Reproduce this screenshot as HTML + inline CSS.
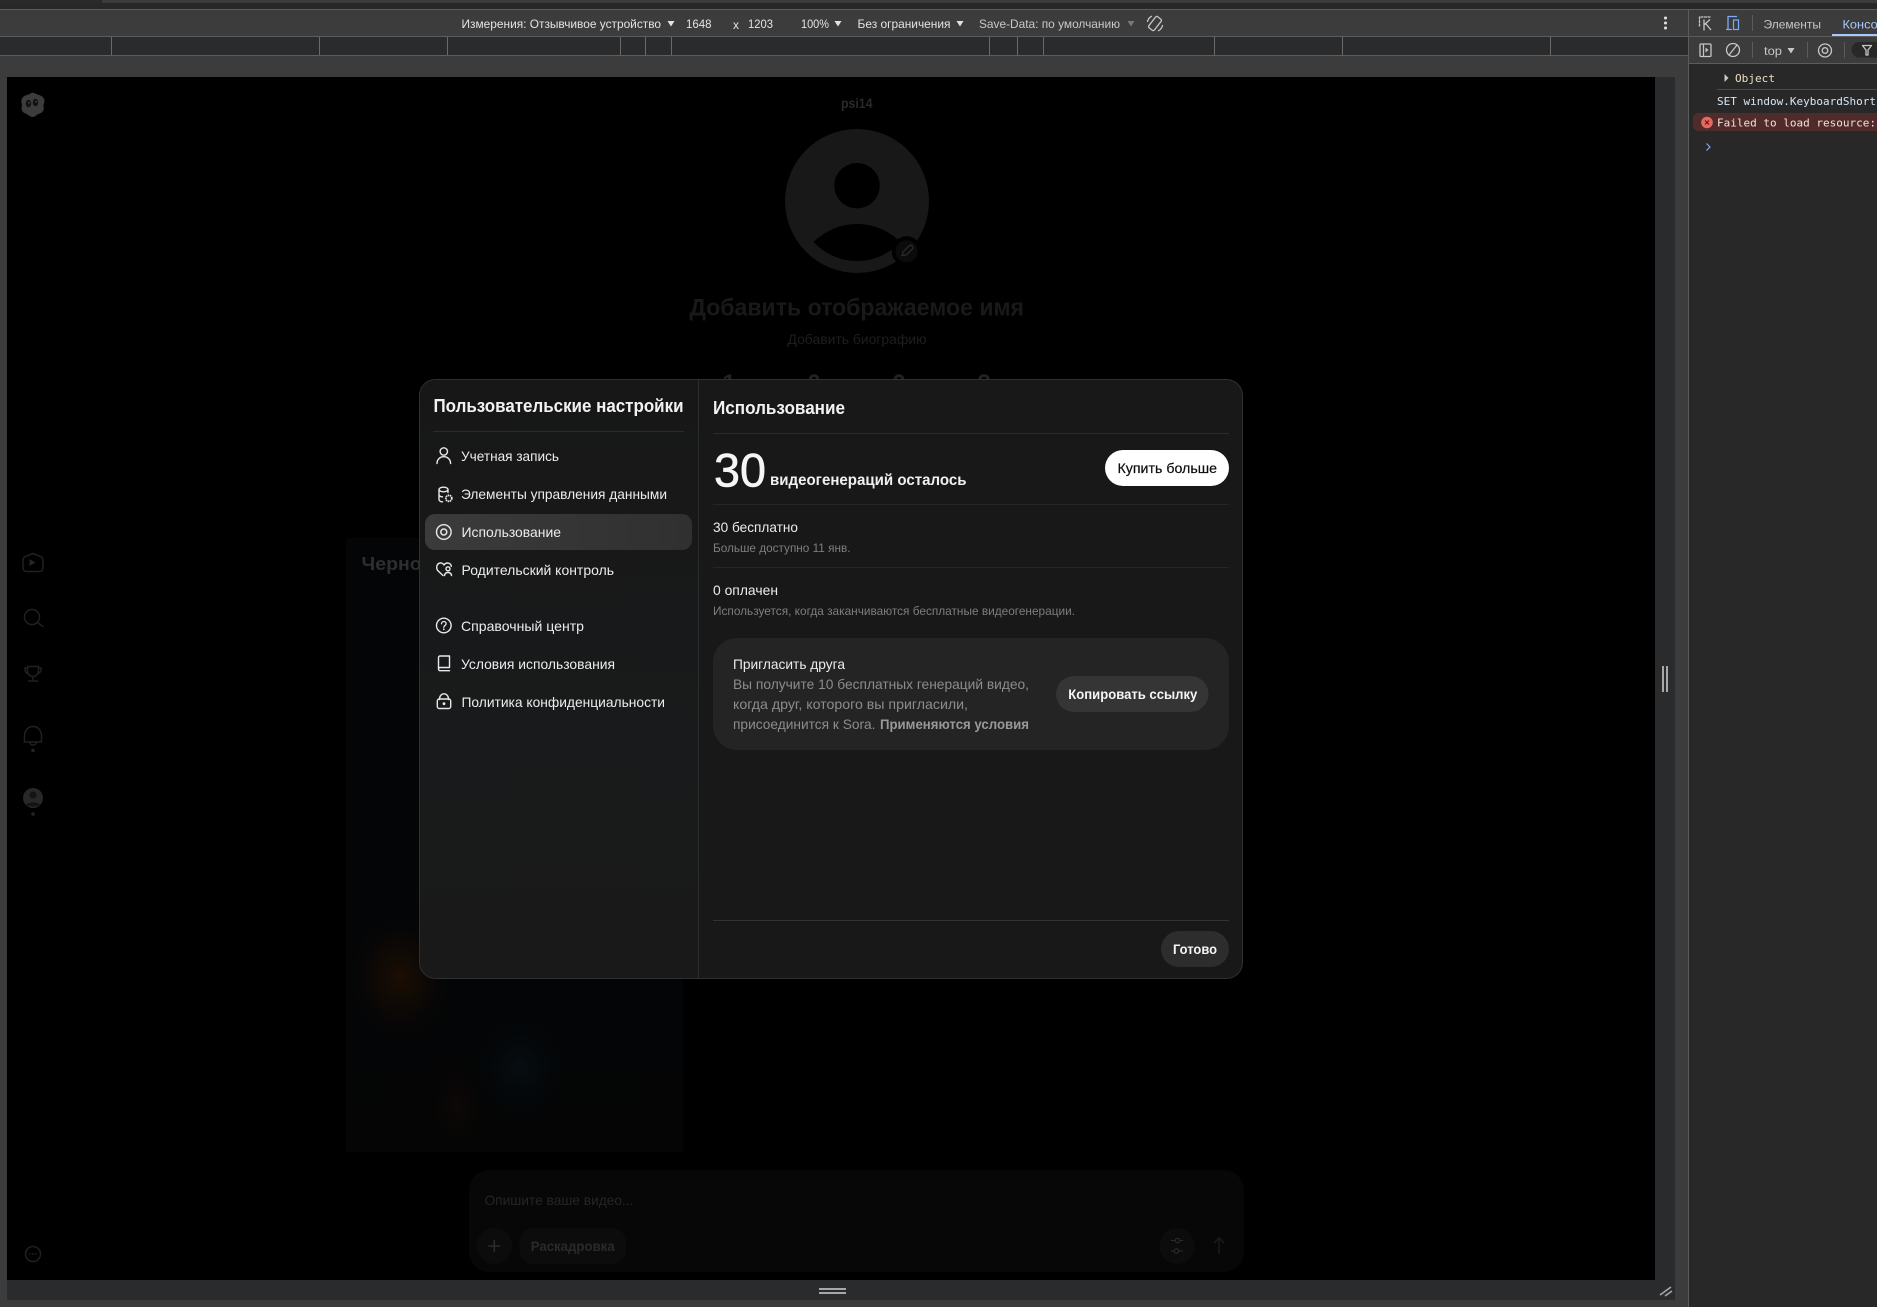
<!DOCTYPE html>
<html lang="ru">
<head>
<meta charset="utf-8">
<title>Использование</title>
<style>
html,body{margin:0;padding:0;background:#000;overflow:hidden}
svg{display:block}
text{font-family:"Liberation Sans","Noto Sans CJK SC",sans-serif}
.b{font-weight:700}
.m{font-family:"DejaVu Sans Mono","Liberation Mono",monospace;font-size:11px}
.t{font-size:12px;fill:#e3e3e3}
.n{font-size:14px;fill:#ececec}
.g{font-size:12px;fill:#7e7e7e}
.c{font-size:14px;fill:#8c8c8c}
.i{fill:none;stroke:#e8e8e8;stroke-width:1.4;stroke-linecap:round;stroke-linejoin:round}
.s{fill:none;stroke:#202020;stroke-width:1.5;stroke-linecap:round;stroke-linejoin:round}
.d{fill:none;stroke:#c4c7c5;stroke-width:1.3;stroke-linecap:round;stroke-linejoin:round}
</style>
</head>
<body>
<svg xmlns="http://www.w3.org/2000/svg" width="1877" height="1307" viewBox="0 0 1877 1307">
<defs>
<radialGradient id="go"><stop offset="0" stop-color="#1c0e04"/><stop offset=".5" stop-color="#110a05" stop-opacity=".7"/><stop offset="1" stop-color="#060606" stop-opacity="0"/></radialGradient>
<radialGradient id="gb"><stop offset="0" stop-color="#060d11"/><stop offset=".6" stop-color="#04080b" stop-opacity=".6"/><stop offset="1" stop-color="#030405" stop-opacity="0"/></radialGradient>
<radialGradient id="gr"><stop offset="0" stop-color="#0e0806"/><stop offset="1" stop-color="#070505" stop-opacity="0"/></radialGradient>
<linearGradient id="act" x1="0" x2="1" y1="0" y2="0"><stop offset="0" stop-color="#3b3b3b"/><stop offset="1" stop-color="#303030"/></linearGradient>
<linearGradient id="card" x1="0" x2="0" y1="0" y2="1"><stop offset="0" stop-color="#030507"/><stop offset=".7" stop-color="#040506"/><stop offset="1" stop-color="#050505"/></linearGradient>
<linearGradient id="side" x1="0" x2="0" y1="0" y2="1"><stop offset="0" stop-color="#171717"/><stop offset=".6" stop-color="#191a1b"/><stop offset="1" stop-color="#191919"/></linearGradient>
<clipPath id="mc"><rect x="420" y="380" width="822" height="598" rx="16"/></clipPath>
<clipPath id="cc"><rect x="346" y="538" width="337" height="614"/></clipPath>
</defs>

<!-- chrome backgrounds -->
<rect width="1877" height="1307" fill="#3c3c3c"/>
<rect x="0" y="0" width="102" height="3" fill="#2a2a2a"/>
<rect x="0" y="3" width="1877" height="6" fill="#282828"/>
<rect x="0" y="9" width="1877" height="1" fill="#5c5c5c"/>
<rect x="0" y="36" width="1688" height="1" fill="#5c5c5c"/>
<rect x="0" y="37" width="1688" height="18" fill="#2a2b2d"/>
<rect x="0" y="55" width="1688" height="1" fill="#5c5c5c"/>
<g fill="#6a6a6a">
<rect x="111" y="37" width="1" height="18"/><rect x="319" y="37" width="1" height="18"/><rect x="447" y="37" width="1" height="18"/>
<rect x="620" y="37" width="1" height="18"/><rect x="645" y="37" width="1" height="18"/><rect x="671" y="37" width="1" height="18"/>
<rect x="989" y="37" width="1" height="18"/><rect x="1017" y="37" width="1" height="18"/><rect x="1043" y="37" width="1" height="18"/>
<rect x="1214" y="37" width="1" height="18"/><rect x="1342" y="37" width="1" height="18"/><rect x="1550" y="37" width="1" height="18"/>
</g>

<!-- device toolbar -->
<text class="t" x="461.500" y="28" textLength="199.500" lengthAdjust="spacingAndGlyphs">Измерения: Отзывчивое устройство</text>
<path d="M667.500 21h7l-3.500 5.500z" fill="#e3e3e3"/>
<text class="t" x="686" y="28" textLength="25.500" lengthAdjust="spacingAndGlyphs">1648</text>
<text class="t" x="733" y="29" textLength="6" lengthAdjust="spacingAndGlyphs">x</text>
<text class="t" x="748" y="28" textLength="25" lengthAdjust="spacingAndGlyphs">1203</text>
<text class="t" x="801" y="28" textLength="28" lengthAdjust="spacingAndGlyphs">100%</text>
<path d="M834.500 21h7l-3.500 5.500z" fill="#e3e3e3"/>
<text class="t" x="857.500" y="28" textLength="93" lengthAdjust="spacingAndGlyphs">Без ограничения</text>
<path d="M956.500 21h7l-3.500 5.500z" fill="#e3e3e3"/>
<text class="t" x="979" y="28" textLength="141" lengthAdjust="spacingAndGlyphs" style="fill:#c8c8c8">Save-Data: по умолчанию</text>
<path d="M1127.500 21h7l-3.500 5.500z" fill="#777"/>
<rect class="d" x="1151.500" y="16.500" width="7" height="14" rx="1.500" transform="rotate(38 1155 23.500)"/>
<path class="d" d="M1147.500 21.500A8 8 0 0 1 1151.500 16.300M1162.500 25.500A8 8 0 0 1 1158.500 30.700"/>
<g fill="#e3e3e3"><circle cx="1665.500" cy="18" r="1.500"/><circle cx="1665.500" cy="23" r="1.500"/><circle cx="1665.500" cy="28" r="1.500"/></g>

<!-- viewport -->
<rect x="7" y="1280" width="1668" height="20" fill="#2a2b2d"/>
<rect x="1655" y="77" width="20" height="1223" fill="#2a2b2d"/>
<rect x="7" y="77" width="1648" height="1203" fill="#000"/>
<rect x="819" y="1288" width="27" height="2" fill="#a8a8a8"/>
<rect x="819" y="1292" width="27" height="2" fill="#a8a8a8"/>
<rect x="1662" y="666" width="2" height="26" fill="#a8a8a8"/>
<rect x="1666" y="666" width="2" height="26" fill="#a8a8a8"/>
<path d="M1660 1295l11-8M1665 1296l7-5" stroke="#a8a8a8" stroke-width="1.600" fill="none"/>

<!-- left nav -->
<path d="M33 93c2.500 0 4 1.500 6 2 3 .8 5.500 3 5.500 6 0 2-1 3-1 4.500s1 3-.5 5.500c-1.500 2.500-4 2.500-5.500 3.500-1.500 1-3 2.500-5 2.500s-3.500-1.500-5-2.500c-2-1.200-4.500-1.500-5.500-4-1-2.500 0-4 0-5.500s-1-3-.5-5c.7-3 3-4.500 5.500-5 2.300-.5 3.500-2 6-2.500z" fill="#3c3c3c"/>
<ellipse cx="28.500" cy="103.500" rx="2.700" ry="3.700" fill="#111"/><ellipse cx="35.500" cy="102.500" rx="2.700" ry="3.700" fill="#111"/>
<circle cx="29" cy="102.700" r=".9" fill="#444"/><circle cx="36" cy="101.700" r=".9" fill="#444"/>
<path class="s" d="M33 553.500l7.500 3c1.500.6 2.500 1.800 2.500 3.500v8c0 2-1.500 3.500-3.500 3.500h-13c-2 0-3.500-1.500-3.500-3.500v-8c0-1.700 1-2.900 2.500-3.500z"/>
<path d="M29.500 559v7l6-3.500z" fill="#262626"/>
<circle class="s" cx="32" cy="617" r="7.500"/><path class="s" d="M37.500 622.500l5.500 4"/>
<path class="s" d="M27.500 666.500h11v4c0 3.500-2.500 6-5.500 6s-5.500-2.500-5.500-6zM27.500 668h-2.500c-.5 3 1 5 3 5.500M38.500 668h2.500c.5 3-1 5-3 5.500M33 676.500v3M28.500 681h9"/>
<path class="s" d="M24.500 742v-6c0-6 4-9.500 8.500-9.500s8.500 3.500 8.500 9.500v6zM29.500 742c.5 2 2 3 3.500 3s3-1 3.500-3"/>
<circle cx="33" cy="750.500" r="1.800" fill="#242424"/>
<circle cx="33" cy="798" r="10" fill="#282828"/>
<circle cx="33" cy="795" r="3.500" fill="#141414"/><path d="M26 805c2-3.500 12-3.500 14 0-3 2-11 2-14 0z" fill="#141414"/>
<circle cx="33" cy="814" r="1.800" fill="#242424"/>
<circle class="s" cx="33" cy="1254" r="7.500"/>
<g fill="#242424"><circle cx="30" cy="1254" r=".9"/><circle cx="33" cy="1254" r=".9"/><circle cx="36" cy="1254" r=".9"/></g>

<!-- profile bg -->
<text class="b" x="841" y="108" textLength="31.500" lengthAdjust="spacingAndGlyphs" style="font-size:14px;fill:#2a2a2a">psi14</text>
<circle cx="857" cy="201" r="72" fill="#181818"/>
<circle cx="857" cy="185.700" r="22.700" fill="#000"/>
<path d="M813.500 242C825 231 840 224 857 224s32 7 43.500 18C889 254 874 261 857 261s-32-7-43.500-19z" fill="#000"/>
<circle cx="906.700" cy="251.300" r="15" fill="#000"/>
<circle cx="906.700" cy="251.300" r="11" fill="#0b0b0b"/>
<path d="M902 255.500l1-3.500 6-6c1-1 2.500-1 3.300 0 .8.800.8 2.200 0 3l-6 6z" fill="none" stroke="#2e2e2e" stroke-width="1.200" stroke-linejoin="round"/>
<text class="b" x="689.500" y="315.500" textLength="334.500" lengthAdjust="spacingAndGlyphs" style="font-size:24px;fill:#191919">Добавить отображаемое имя</text>
<text x="787.500" y="344" textLength="139" lengthAdjust="spacingAndGlyphs" style="font-size:14px;fill:#1e1e1e">Добавить биографию</text>
<text class="b" x="729" y="391" text-anchor="middle" style="font-size:24px;fill:#222">1</text>
<text class="b" x="814" y="391" text-anchor="middle" style="font-size:24px;fill:#222">0</text>
<text class="b" x="899" y="391" text-anchor="middle" style="font-size:24px;fill:#222">0</text>
<text class="b" x="984" y="391" text-anchor="middle" style="font-size:24px;fill:#222">2</text>

<!-- bg card -->
<rect x="346" y="538" width="337" height="614" fill="url(#card)"/>
<g clip-path="url(#cc)">
<ellipse cx="400" cy="977" rx="55" ry="65" fill="url(#go)"/>
<ellipse cx="520" cy="1067" rx="55" ry="60" fill="url(#gb)"/>
<ellipse cx="457" cy="1105" rx="32" ry="50" fill="url(#gr)"/>
</g>
<text class="b" x="361.500" y="570" textLength="106" lengthAdjust="spacingAndGlyphs" style="font-size:18px;fill:#2e2e2e">Черновики</text>

<!-- prompt -->
<rect x="469" y="1170" width="775" height="102" rx="20" fill="#070707"/>
<text x="484.500" y="1205" textLength="149" lengthAdjust="spacingAndGlyphs" style="font-size:14px;fill:#252525">Опишите ваше видео...</text>
<rect x="477" y="1228" width="35" height="36" rx="17.500" fill="#0c0c0c"/>
<path d="M494.300 1240v12M488.300 1246h12" stroke="#2c2c2c" stroke-width="1.600"/>
<rect x="519.500" y="1228" width="106.500" height="36" rx="14" fill="#0c0c0c"/>
<text class="b" x="530.700" y="1251" textLength="84" lengthAdjust="spacingAndGlyphs" style="font-size:14px;fill:#2a2a2a">Раскадровка</text>
<rect x="1159.500" y="1228" width="35" height="36" rx="17.500" fill="#0c0c0c"/>
<path d="M1171 1240.500h4M1180 1240.500h3M1171 1251h3M1179 1251h4" stroke="#2c2c2c" stroke-width="1.100" fill="none"/>
<circle cx="1177.500" cy="1240.500" r="2.200" fill="none" stroke="#2c2c2c" stroke-width="1.100"/>
<circle cx="1176.500" cy="1251" r="2.200" fill="none" stroke="#2c2c2c" stroke-width="1.100"/>
<path d="M1219 1254v-16M1214 1243l5-5 5 5" fill="none" stroke="#1a1a1a" stroke-width="1.600"/>

<!-- modal -->
<rect x="419.500" y="379.500" width="823" height="599" rx="16" fill="#181818" stroke="#303030"/>
<g clip-path="url(#mc)">
<rect x="420" y="380" width="278" height="598" fill="url(#side)"/>
</g>
<rect x="698" y="380" width="1" height="598" fill="#2c2c2c"/>

<!-- modal sidebar -->
<text class="b" x="433.500" y="412" textLength="250" lengthAdjust="spacingAndGlyphs" style="font-size:18px;fill:#f2f2f2">Пользовательские настройки</text>
<rect x="433" y="431" width="251" height="1" fill="#2c2c2c"/>
<rect x="425" y="514" width="267" height="36" rx="10" fill="url(#act)"/>
<text class="n" x="461" y="461" textLength="98" lengthAdjust="spacingAndGlyphs">Учетная запись</text>
<text class="n" x="461" y="499" textLength="206" lengthAdjust="spacingAndGlyphs">Элементы управления данными</text>
<text class="n" x="461.500" y="537" textLength="99.500" lengthAdjust="spacingAndGlyphs">Использование</text>
<text class="n" x="461.500" y="575" textLength="152.500" lengthAdjust="spacingAndGlyphs">Родительский контроль</text>
<text class="n" x="461" y="631" textLength="123" lengthAdjust="spacingAndGlyphs">Справочный центр</text>
<text class="n" x="461" y="669" textLength="154" lengthAdjust="spacingAndGlyphs">Условия использования</text>
<text class="n" x="461.500" y="707" textLength="203.500" lengthAdjust="spacingAndGlyphs">Политика конфиденциальности</text>

<circle class="i" cx="443.800" cy="451.500" r="3.700"/>
<path class="i" d="M437 463.500c0-4 3-6.800 6.800-6.800s6.800 2.800 6.800 6.800"/>
<path class="i" d="M448 492.500v-3c0-1.300-2-2.300-4.500-2.300s-4.500 1-4.500 2.300v10c0 1.300 1.500 2.200 3.500 2.300M439 489.500c0 1.300 2 2.300 4.500 2.300s4.500-1 4.500-2.300M439 494.500c0 1.300 1.500 2.200 3.500 2.300"/>
<circle cx="448.800" cy="498.300" r="3" fill="none" stroke="#e8e8e8" stroke-width="1.800" stroke-dasharray="1.500 .6"/>
<circle class="i" cx="443.800" cy="532" r="7.300"/>
<circle cx="443.800" cy="532" r="3" fill="none" stroke="#e8e8e8" stroke-width="1.500"/>
<path class="i" d="M443 575.500l-4.800-4.500c-2.500-2.500-1.800-7.500 2-8 2-.3 3 .8 3.800 2 1-1.500 2.500-2.300 4.300-1.900 1.700.4 2.800 1.700 3 3.200"/>
<circle class="i" cx="448" cy="568.800" r="2"/>
<path class="i" d="M444.500 575.500c.3-2 1.800-3 3.500-3s3.200 1 3.500 3"/>
<circle class="i" cx="443.800" cy="625.500" r="7.300"/>
<path d="M441.500 623.800c0-1.300 1-2.300 2.300-2.300s2.300.9 2.300 2.200c0 1.900-2.300 1.800-2.300 3.600" fill="none" stroke="#e8e8e8" stroke-width="1.300" stroke-linecap="round"/>
<circle cx="443.800" cy="629.300" r=".9" fill="#e8e8e8"/>
<path class="i" d="M438.500 668.500v-11c0-.8.700-1.500 1.500-1.500h9.500v11.500H440c-.8 0-1.500.7-1.500 1.500s.7 1.700 1.500 1.700h9.500"/>
<path class="i" d="M439.500 699.500v-.5c0-3 2-5.200 4.500-5.200s4.500 2.200 4.500 5.200v.5"/>
<rect class="i" x="437.300" y="699" width="13.400" height="9.500" rx="2"/>
<circle cx="444" cy="703.700" r="1.400" fill="#e8e8e8"/>

<!-- modal main -->
<text class="b" x="713" y="414" textLength="132" lengthAdjust="spacingAndGlyphs" style="font-size:18px;fill:#f2f2f2">Использование</text>
<rect x="713" y="433" width="516" height="1" fill="#2c2c2c"/>
<text x="714" y="486.500" textLength="52" lengthAdjust="spacingAndGlyphs" style="font-size:47px;fill:#f5f5f5;stroke:#f5f5f5;stroke-width:.6">30</text>
<text class="b" x="770" y="485" textLength="196.500" lengthAdjust="spacingAndGlyphs" style="font-size:16px;fill:#f0f0f0">видеогенераций осталось</text>
<rect x="1105" y="450" width="124" height="36" rx="18" fill="#fff"/>
<text x="1117.500" y="473" textLength="99.500" lengthAdjust="spacingAndGlyphs" style="font-size:14px;fill:#0d0d0d;stroke:#0d0d0d;stroke-width:.2">Купить больше</text>
<rect x="713" y="504" width="516" height="1" fill="#262626"/>
<text class="n" x="713" y="532" textLength="85" lengthAdjust="spacingAndGlyphs">30 бесплатно</text>
<text class="g" x="713" y="552" textLength="137.500" lengthAdjust="spacingAndGlyphs">Больше доступно 11 янв.</text>
<rect x="713" y="567" width="516" height="1" fill="#262626"/>
<text class="n" x="713" y="595" textLength="65" lengthAdjust="spacingAndGlyphs">0 оплачен</text>
<text class="g" x="713" y="615" textLength="362" lengthAdjust="spacingAndGlyphs">Используется, когда заканчиваются бесплатные видеогенерации.</text>

<rect x="713" y="638" width="516" height="112" rx="24" fill="#242424"/>
<text class="n" x="733" y="669" textLength="112" lengthAdjust="spacingAndGlyphs">Пригласить друга</text>
<text class="c" x="733" y="689" textLength="296" lengthAdjust="spacingAndGlyphs">Вы получите 10 бесплатных генераций видео,</text>
<text class="c" x="733" y="709" textLength="235" lengthAdjust="spacingAndGlyphs">когда друг, которого вы пригласили,</text>
<text class="c" x="733" y="729" textLength="142.500" lengthAdjust="spacingAndGlyphs">присоединится к Sora.</text>
<text class="c b" x="880" y="729" textLength="149" lengthAdjust="spacingAndGlyphs" style="font-weight:700;fill:#999">Применяются условия</text>
<rect x="1056" y="676" width="152.500" height="36" rx="18" fill="#353535"/>
<text class="b" x="1068.300" y="699" textLength="129" lengthAdjust="spacingAndGlyphs" style="font-size:14px;fill:#f5f5f5">Копировать ссылку</text>

<rect x="713" y="920" width="516" height="1" fill="#333"/>
<rect x="1161" y="931" width="68" height="36" rx="18" fill="#2d2d2d"/>
<text class="b" x="1173" y="954" textLength="44" lengthAdjust="spacingAndGlyphs" style="font-size:14px;fill:#f5f5f5">Готово</text>

<!-- devtools -->
<rect x="1688" y="10" width="189" height="1297" fill="#282828"/>
<rect x="1688" y="10" width="189" height="26" fill="#3c3c3c"/>
<rect x="1688" y="36" width="189" height="1" fill="#5c5c5c"/>
<rect x="1689" y="37" width="188" height="26" fill="#3c3c3c"/>
<rect x="1689" y="63" width="188" height="1" fill="#5c5c5c"/>
<rect x="1688" y="10" width="1" height="1297" fill="#5c5c5c"/>

<path class="d" d="M1699.500 26v-9h11" stroke-dasharray="2 1.500"/>
<path d="M1704 19.500v11M1704 25l6-5.500M1706 24l5 6" fill="none" stroke="#c4c7c5" stroke-width="1.300"/>
<path d="M1728 29.500v-13h9M1726 29.500h6" fill="none" stroke="#7cacf8" stroke-width="1.300"/>
<rect x="1733.500" y="20" width="5" height="9.500" fill="none" stroke="#7cacf8" stroke-width="1.200"/>
<rect x="1752" y="15" width="1" height="16" fill="#5c5c5c"/>
<text class="t" x="1763.500" y="28.500" textLength="57.500" lengthAdjust="spacingAndGlyphs" style="fill:#c7c7c7">Элементы</text>
<text class="t" x="1842.500" y="28.500" style="fill:#a8c7fa" textLength="49" lengthAdjust="spacingAndGlyphs">Консоль</text>
<rect x="1832" y="34" width="45" height="2" fill="#a8c7fa"/>

<rect class="d" x="1700" y="44" width="11" height="12.500" rx="1"/>
<path d="M1703.500 44v12.500" stroke="#c4c7c5" stroke-width="1.200"/>
<path d="M1705.500 47.500v5l3-2.500z" fill="#c4c7c5"/>
<circle class="d" cx="1733" cy="50" r="6.500"/><path class="d" d="M1729 55l8-10"/>
<rect x="1752" y="42" width="1" height="16" fill="#5c5c5c"/>
<text class="t" x="1764" y="55" textLength="18" lengthAdjust="spacingAndGlyphs" style="fill:#c7c7c7">top</text>
<path d="M1787.500 48h7l-3.500 5.500z" fill="#c7c7c7"/>
<rect x="1807" y="42" width="1" height="16" fill="#5c5c5c"/>
<circle class="d" cx="1825" cy="50.500" r="6.500"/>
<circle class="d" cx="1825" cy="50.500" r="2.800"/>
<rect x="1844" y="42" width="1" height="16" fill="#5c5c5c"/>
<rect x="1851.500" y="42" width="40" height="15.500" rx="7.700" fill="#282828"/>
<path class="d" d="M1862.500 45.500h9l-3.500 4.500v5h-2v-5z"/>

<path d="M1724.500 74v8l4-4z" fill="#c7c7c7"/>
<text class="m" x="1735" y="82" style="fill:#e8e0c0" textLength="40" lengthAdjust="spacingAndGlyphs">Object</text>
<rect x="1717" y="89" width="160" height="1" fill="#4a4a4a"/>
<text class="m" x="1717" y="105" style="fill:#d6e6f5">SET window.KeyboardShortcuts</text>
<rect x="1693" y="113" width="190" height="18" rx="5" fill="#4f2b2a"/>
<circle cx="1707" cy="122.500" r="5.800" fill="#e46962"/>
<path d="M1705 120.500l4 4M1709 120.500l-4 4" stroke="#601410" stroke-width="1.100"/>
<text class="m" x="1717" y="126.500" style="fill:#f9dedc">Failed to load resource:</text>
<path d="M1706.500 143.500l3.500 3.500-3.500 3.500" fill="none" stroke="#7cacf8" stroke-width="1.200"/>
</svg>
</body>
</html>
